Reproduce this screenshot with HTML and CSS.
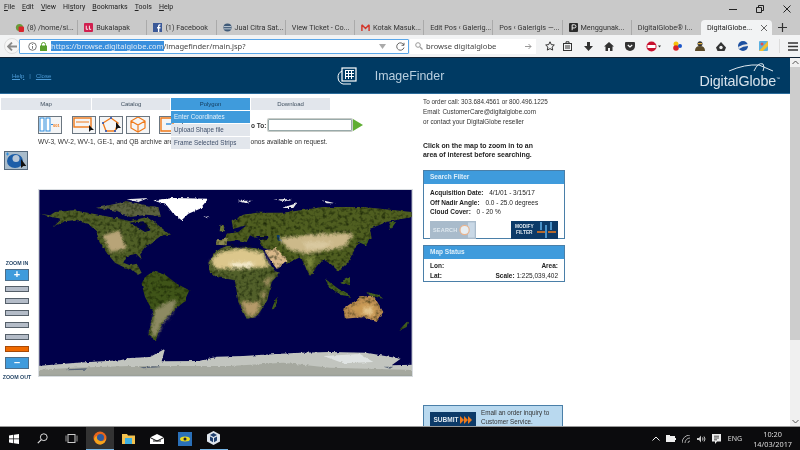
FILE: index.html
```html
<!DOCTYPE html>
<html lang="en">
<head>
<meta charset="utf-8">
<title>DigitalGlobe ImageFinder</title>
<link rel="stylesheet" href="styles.css">
</head>
<body>
<div class="screen">
  <div class="chrome">
    <div class="menubar">
      <nav class="menu"><span><u>F</u>ile</span><span><u>E</u>dit</span><span><u>V</u>iew</span><span>Hi<u>s</u>tory</span><span><u>B</u>ookmarks</span><span><u>T</u>ools</span><span><u>H</u>elp</span></nav>
      <div class="winctl">
        <svg width="10" height="10" viewBox="0 0 10 10"><path d="M1 5.500h8" stroke="#222" fill="none"/></svg>
        <svg width="10" height="10" viewBox="0 0 10 10"><path d="M1.500 3.500h5v5h-5zM3.500 3.500v-2h5v5h-2" stroke="#222" fill="none"/></svg>
        <svg width="10" height="10" viewBox="0 0 10 10"><path d="M1.500 1.500l7 7M8.500 1.500l-7 7" stroke="#222" fill="none"/></svg>
      </div>
    </div>
    <div class="tabs">
      <div class="tab"><svg class="fav" viewBox="0 0 10 10"><circle cx="5" cy="5" r="4" fill="#6a9a3a"/><rect x="4" y="4" width="6" height="6" rx="1" fill="#d8232a"/></svg><span>(8) /home/si...</span></div>
      <div class="tab"><svg class="fav" viewBox="0 0 10 10"><rect width="10" height="10" rx="1" fill="#d11f4f"/><path d="M2.500 3v4h2M6 3v4h2" stroke="#fff" fill="none"/></svg><span>Bukalapak</span></div>
      <div class="tab"><svg class="fav" viewBox="0 0 10 10"><rect width="10" height="10" fill="#3b5998"/><path d="M7 10V6h1.300V4.500H7V3.500q0-.8 1.300-.7V1.500Q5.500 1 5.500 3.500v1H4.500V6h1v4z" fill="#fff"/></svg><span>(1) Facebook</span></div>
      <div class="tab"><svg class="fav" viewBox="0 0 10 10"><circle cx="5" cy="5" r="4.500" fill="#3f5a78"/><path d="M1 4h8M1 6.500h8" stroke="#cfd8e0"/></svg><span>Jual Citra Sat...</span></div>
      <div class="tab"><span>View Ticket - Co...</span></div>
      <div class="tab"><svg class="fav" viewBox="0 0 10 10"><path d="M1 2v7M9 2v7M1 2l4 4 4-4" stroke="#d3362a" stroke-width="1.600" fill="none"/></svg><span>Kotak Masuk...</span></div>
      <div class="tab"><span>Edit Pos ‹ Galerig...</span></div>
      <div class="tab"><span>Pos ‹ Galerigis —...</span></div>
      <div class="tab"><svg class="fav" viewBox="0 0 10 10"><rect width="10" height="10" rx="1" fill="#2b2b2b"/><path d="M3.500 8V2h2.500a1.700 1.700 0 0 1 0 3.500H3.500" stroke="#fff" fill="none"/></svg><span>Menggunak...</span></div>
      <div class="tab"><span>DigitalGlobe® I...</span></div>
      <div class="tab tab-active"><span>DigitalGlobe...</span><svg class="tabx" width="8" height="8" viewBox="0 0 8 8"><path d="M1 1l6 6M7 1l-6 6" stroke="#666" fill="none"/></svg></div>
      <svg class="plus" width="9" height="9" viewBox="0 0 9 9"><path d="M4.500 0v9M0 4.500h9" stroke="#333" stroke-width="1.200"/></svg>
    </div>
    <div class="navbar">
      <div class="back"><svg width="10" height="9" viewBox="0 0 10 9"><path d="M5 .5L1 4.500l4 4M1 4.500h9" stroke="#8a8a8a" stroke-width="1.800" fill="none"/></svg></div>
      <div class="urlbar">
        <svg class="info" width="9" height="9" viewBox="0 0 9 9"><circle cx="4.500" cy="4.500" r="3.800" stroke="#777" fill="none"/><path d="M4.500 4v2.800M4.500 2v1" stroke="#777"/></svg>
        <svg class="lock" width="7" height="9" viewBox="0 0 7 9"><rect y="3.500" width="7" height="5.500" rx=".5" fill="#5aa02c"/><path d="M1.500 4V2.500a2 2 0 0 1 4 0V4" stroke="#5aa02c" fill="none"/></svg>
        <span class="url"><span class="url-sel">https://browse.digitalglobe.com</span>/imagefinder/main.jsp?</span>
        <svg class="drop" width="7" height="5" viewBox="0 0 7 5"><path d="M0 0h7L3.500 5z" fill="#aaa"/></svg>
        <svg class="reload" width="9" height="9" viewBox="0 0 9 9"><path d="M7.800 3A3.700 3.700 0 1 0 8 5.500M8 .8V3.300H5.500" stroke="#666" fill="none"/></svg>
      </div>
      <div class="searchbar">
        <svg width="8" height="8" viewBox="0 0 8 8"><circle cx="3" cy="3" r="2.300" stroke="#999" fill="none"/><path d="M5 5l2.500 2.500" stroke="#999" stroke-width="1.200"/></svg>
        <span class="search-q">browse digitalglobe</span>
        <svg class="go" width="7" height="7" viewBox="0 0 7 7"><path d="M0 3.500h6M3.500 1l2.500 2.500L3.500 6" stroke="#999" fill="none"/></svg>
      </div>
      <div class="tools">
        <svg width="10" height="10" viewBox="0 0 10 10"><path d="M5 .8l1.300 2.800 3 .4-2.200 2.100.6 3L5 7.600 2.300 9.100l.6-3L.7 4l3-.4z" stroke="#333" fill="none"/></svg>
        <svg class="t-lib" width="9" height="10" viewBox="0 0 9 10"><rect x=".5" y="2.500" width="8" height="7" stroke="#333" fill="none"/><path d="M3 2.500V.8h3v1.700M2 5h5M2 7h5" stroke="#333" fill="none"/></svg>
        <svg class="t-dl" width="9" height="9" viewBox="0 0 9 9"><path d="M3 0h3v4h3L4.500 9 0 4h3z" fill="#333"/></svg>
        <svg class="t-home" width="10" height="9" viewBox="0 0 10 9"><path d="M5 0l5 4.500H8.500V9H6V6H4v3H1.500V4.500H0z" fill="#333"/></svg>
        <svg class="t-pocket" width="10" height="9" viewBox="0 0 10 9"><path d="M1 0h8a1 1 0 0 1 1 1v3a5 5 0 0 1-10 0V1a1 1 0 0 1 1-1z" fill="#333"/><path d="M2.800 3l2.200 2 2.200-2" stroke="#fff" stroke-width="1.200" fill="none"/></svg>
        <svg class="t-stop" width="15" height="11" viewBox="0 0 15 11"><circle cx="5.500" cy="5.500" r="5" fill="#c8102e"/><rect x="1.500" y="4" width="8" height="3" fill="#fff"/><path d="M12 4.500h3l-1.500 2z" fill="#333"/></svg>
        <svg class="t-c1" width="9" height="10" viewBox="0 0 9 10"><circle cx="3" cy="3" r="2.500" fill="#f4c20d"/><circle cx="3" cy="7" r="2.800" fill="#d8232a"/><circle cx="7" cy="5" r="2" fill="#1a55c9"/></svg>
        <svg class="t-c2" width="10" height="10" viewBox="0 0 10 10"><circle cx="5" cy="2.800" r="2.500" fill="#333"/><path d="M0 10q0-5 5-5t5 5z" fill="#5a4a2a"/><rect x="3" y="2" width="4" height="1.200" fill="#e0b040"/></svg>
        <svg class="t-c3" width="10" height="9" viewBox="0 0 10 9"><path d="M5 0l5 5.500-1.500 3.500h-7L0 5.500z" fill="#333"/><circle cx="5" cy="5.500" r="1.700" fill="#eee"/></svg>
        <svg class="t-c4" width="10" height="10" viewBox="0 0 10 10"><circle cx="5" cy="5" r="5" fill="#1c4fa0"/><path d="M0 6q5-3 10-3v2Q5 5 1 8z" fill="#e8e8e8"/></svg>
        <svg class="t-c5" width="9" height="10" viewBox="0 0 9 10"><rect width="9" height="10" rx="1" fill="#5bb0e0"/><path d="M0 10l9-10v5L4 10z" fill="#f0c030"/><circle cx="3" cy="3" r="1.500" fill="#e05050"/></svg>
        <span class="sep"></span>
        <svg class="t-menu" width="10" height="9" viewBox="0 0 10 9"><path d="M0 1h10M0 4.500h10M0 8h10" stroke="#333" stroke-width="1.400"/></svg>
      </div>
    </div>
  </div>

  <div class="viewport">
    <main class="page">
      <header class="brandbar">
        <div class="helplinks"><a>Help</a><span>|</span><a>Close</a></div>
        <div class="brand">
          <svg width="20" height="18" viewBox="0 0 20 18"><rect x="5" y="1" width="14" height="13" fill="none" stroke="#fff" stroke-width="1.200"/><path d="M8 3.500h9M8 6.500h9M8 9.500h9M8.500 3v9M11.500 3v9M14.500 3v9" stroke="#fff"/><path d="M5 4a7 7 0 0 0 1 13h8" stroke="#fff" fill="none"/></svg>
          <span>ImageFinder</span>
        </div>
        <div class="logo">
          <svg class="arc" width="44" height="10" viewBox="0 0 44 10"><path d="M0 9Q16 2 30 3L44 9M25 9Q29 0 34 2q2 3 0 7" stroke="#dfe8ef" fill="none"/></svg>
          <span>DigitalGlobe<sup>™</sup></span>
        </div>
      </header>
      <div class="content">
        <div class="leftcol">
          <div class="tabmenu">
            <div class="tm tm-map">Map</div>
            <div class="tm tm-cat">Catalog</div>
            <div class="tm tm-poly tm-on">Polygon
              <div class="dropdown">
                <div class="dd dd-on">Enter Coordinates</div>
                <div class="dd">Upload Shape file</div>
                <div class="dd">Frame Selected Strips</div>
              </div>
            </div>
            <div class="tm tm-dl">Download</div>
          </div>
          <div class="toolrow">
            <div class="tool tool-a"><svg width="24" height="17" viewBox="0 0 24 17"><rect x="2" y="2" width="4" height="13" fill="#fff" stroke="#2f8fe0"/><rect x="8" y="2" width="4" height="13" fill="#fff" stroke="#2f8fe0"/><path d="M13 8.500h2" stroke="#2f8fe0"/><text x="15" y="10.500" class="tool-txt">001</text></svg></div>
            <div class="tool tool-b"><svg width="24" height="17" viewBox="0 0 24 17"><rect x="2" y="2" width="17" height="9" fill="none" stroke="#f07a1a" stroke-width="1.400"/><path d="M4 6h13" stroke="#f07a1a"/><path d="M17 9l0 7 2-2 3 0z" fill="#111"/></svg></div>
            <div class="tool tool-c"><svg width="24" height="17" viewBox="0 0 24 17"><path d="M12 2l7 5-3 8H7L4 7z" fill="none" stroke="#f07a1a" stroke-width="1.300"/><circle cx="12" cy="2" r="1" fill="#1a55c9"/><circle cx="4" cy="7" r="1" fill="#1a55c9"/><circle cx="7" cy="15" r="1" fill="#1a55c9"/><circle cx="16" cy="15" r="1" fill="#1a55c9"/><path d="M17 6v8l2-2 3 0z" fill="#111"/></svg></div>
            <div class="tool tool-d"><svg width="24" height="17" viewBox="0 0 24 17"><path d="M12 1l7 4v7l-7 4-7-4V5zM5 5l7 4 7-4M12 9v7" fill="none" stroke="#f07a1a" stroke-width="1.200"/></svg></div>
            <div class="tool tool-e"><svg width="24" height="17" viewBox="0 0 24 17"><path d="M2 2h12v13H2z" fill="none" stroke="#f07a1a" stroke-width="1.400"/><path d="M7 8h6" stroke="#2f8fe0" stroke-width="1.400"/></svg></div>
            <div class="zoomto">
              <span class="zt-label">o To:</span>
              <span class="zt-input"></span>
              <svg width="10" height="12" viewBox="0 0 10 12"><path d="M0 0l10 6-10 6z" fill="#5fae33"/></svg>
            </div>
          </div>
          <p class="archive"><span class="arch-a">WV-3, WV-2, WV-1, GE-1, and QB archive are</span><span>onos available on request.</span></p>
          <div class="globe"><svg width="24" height="19" viewBox="0 0 24 19"><rect width="24" height="19" fill="#a9bccb"/><rect x=".5" y=".5" width="23" height="18" fill="none" stroke="#55697c"/><ellipse cx="11" cy="10" rx="8" ry="7" fill="#1d5ea8"/><circle cx="12" cy="7.500" r="3.500" fill="#b7c6d6"/><path d="M17 8v9l2.300-2 3 0z" fill="#111"/><path d="M2 3h3M3.500 1.500v3" stroke="#2f8fe0"/></svg></div>
          <div class="maprow">
            <div class="zoomcol">
              <div class="zlabel">ZOOM IN</div>
              <div class="zbtn">+</div>
              <div class="zbar"></div>
              <div class="zbar"></div>
              <div class="zbar"></div>
              <div class="zbar"></div>
              <div class="zbar"></div>
              <div class="zbar zbar-on"></div>
              <div class="zbtn zbtn-minus">–</div>
              <div class="zlabel zlabel-out">ZOOM OUT</div>
            </div>
            <svg class="map" width="373" height="186" viewBox="28 14 1117 558">
              <defs>
                <filter id="rough" x="-3%" y="-3%" width="106%" height="106%" color-interpolation-filters="sRGB">
                  <feTurbulence type="fractalNoise" baseFrequency="0.07" numOctaves="2" seed="4" result="n"/>
                  <feDisplacementMap in="SourceGraphic" in2="n" scale="9" xChannelSelector="R" yChannelSelector="G" result="d"/>
                  <feTurbulence type="fractalNoise" baseFrequency="0.09" numOctaves="2" seed="11"/>
                  <feColorMatrix values="0 0 0 0 .05  0 0 0 0 .09  0 0 0 0 0  1.600 0 0 0 -.72"/>
                  <feComposite in2="d" operator="in" result="m"/>
                  <feMerge><feMergeNode in="d"/><feMergeNode in="m"/></feMerge>
                </filter>
                <filter id="soft" x="-20%" y="-20%" width="140%" height="140%" color-interpolation-filters="sRGB">
                  <feTurbulence type="fractalNoise" baseFrequency="0.08" numOctaves="2" seed="9" result="n"/>
                  <feGaussianBlur in="SourceGraphic" stdDeviation="5" result="b"/>
                  <feDisplacementMap in="b" in2="n" scale="14" xChannelSelector="R" yChannelSelector="G"/>
                </filter>
                <filter id="ice" x="-2%" y="-20%" width="104%" height="140%" color-interpolation-filters="sRGB">
                  <feTurbulence type="fractalNoise" baseFrequency="0.1" numOctaves="2" seed="21" result="n"/>
                  <feDisplacementMap in="SourceGraphic" in2="n" scale="9" xChannelSelector="R" yChannelSelector="G"/>
                </filter>
              </defs>
              <rect x="28" y="14" width="1117" height="558" fill="#00004a"/>
              <g filter="url(#rough)">
                <path fill="#4f5e26" d="M30 85L60 90 75 80 130 75 190 85 240 95 270 100 300 108 350 95 385 120 420 148 395 150 375 165 345 185 330 205 335 222 318 205 290 212 280 232 300 240 320 235 335 262 325 268 305 252 280 245 255 232 232 205 208 170 200 140 175 115 130 105 105 108 70 125 95 100 65 95Z"/>
                <path fill="#5c6240" d="M200 68L290 48 350 60 385 65 392 92 350 88 300 95 260 76Z"/>
                <path fill="#00004a" d="M298 112L340 108 362 135 345 140 325 128Z"/>
                <path fill="#3f5418" d="M335 295L345 275 370 258 405 268 440 295 478 315 462 350 425 380 405 400 385 440 378 465 355 450 370 380 345 335Z"/>
                <path fill="#52602a" d="M535 232L560 195 590 182 640 180 700 195 705 215 735 258 750 262 725 290 712 345 680 395 650 400 625 350 615 285 560 275 540 262Z"/>
                <path fill="#4f5e20" d="M580 168L590 145 625 140 650 120 610 130 605 108 640 88 680 82 760 82 880 65 1000 65 1145 80 1145 95 1070 110 1020 130 1025 160 985 170 975 190 955 230 925 258 905 238 880 222 840 272 812 215 770 235 725 195 700 188 690 165 660 150 650 170 625 165 600 168Z"/>
                <path fill="#8c8a52" d="M558 178L560 162 592 160 590 180Z"/>
                <path fill="#6f7a3a" d="M572 118l12 2-3 18-12 0z"/>
                <path fill="#0a3a66" d="M740 150l12-3 2 24-10-2z"/>
                <path fill="#00004a" d="M680 152l38 0-8 12-26-2zM600 175l90 6-10 6-80 0z"/>
                <path fill="#d9b88a" d="M703 195L738 188 775 226 740 250 726 232Z"/>
                <path fill="#b88a50" d="M940 370L990 335 1030 330 1060 380 1040 410 1000 395 945 400Z"/>
                <path fill="#45601f" d="M885 280l40 30 40 25-30-6-35-20zM930 290l30-15 0 25zM1005 320l40 8 15 12-40-10zM725 372l15-38 2 15-10 22zM1105 437l30-32-5 20zM1078 110l20 0-18 25zM985 170l35-10-12 20z"/>
              </g>
              <g filter="url(#ice)">
                <path fill="#fff" d="M370 45L430 38 535 40 510 70 475 85 455 105 430 85 410 60Z"/>
                <path fill="#e8e8ea" d="M620 46h45l-15 8zM730 42h55l-20 6zM875 44l40 10-25 0zM755 68l45-14-10 14zM290 42l65-4-30 12zM520 92l20 2-8 5z"/>
              </g>
              <g filter="url(#soft)">
                <path fill="#dcc78c" d="M540 228L575 197 640 190 700 202 718 245 620 250 560 250Z"/>
                <path fill="#f6edd0" d="M600 232h75l-10 14h-60z"/>
                <path fill="#b59a6a" d="M632 350L695 350 680 388 652 392Z"/>
                <path fill="#a08f60" d="M700 285l28-15-18 38zM690 320l20 0-10 30z"/>
                <path fill="#ccb98a" d="M745 160L830 148 970 142 945 185 830 205 780 195Z"/>
                <path fill="#d9c9a0" d="M820 170h90l-30 20h-50z"/>
                <path fill="#b8a478" d="M218 150L268 135 290 192 240 200Z"/>
                <path fill="#7f8a3e" d="M825 218l30-5-15 48z"/>
                <path fill="#8d8a62" d="M375 372L408 352 442 342 425 385 395 415 380 455 362 448Z"/>
                <path fill="#c99a55" d="M955 372L1000 348 1040 362 1040 392 990 392Z"/>
                <path fill="#e2c48c" d="M1000 365l28 0 0 22-28 0z"/>
              </g>
              <g filter="url(#ice)">
                <path fill="#c2c5bf" d="M20 542L140 532 270 525 300 518 360 515 405 490 395 528 510 527 560 514 640 512 750 505 810 502 900 500 1010 502 1112 520 1085 540 1160 538V600H20Z"/>
                <path fill="#a5a89f" d="M20 554L130 547 300 542 450 542 600 542 760 532 900 547 1160 554V600H20Z"/>
                <path fill="#dfe3e2" d="M880 512l110-6 40 24-90 4z"/>
                <path fill="#5a6678" d="M110 552l60-3 0 4-60 2zM330 546l60-4 0 4-50 3zM1060 544l30 0-10 6z"/>
              </g>
              <rect x="28" y="568" width="1117" height="4" fill="#9ca19a"/>
            </svg>
          </div>
        </div>
        <aside class="rightcol">
          <div class="order">To order call: 303.684.4561 or 800.496.1225<br>Email: CustomerCare@digitalglobe.com<br>or contact your DigitalGlobe reseller</div>
          <p class="hint">Click on the map to zoom in to an<br>area of interest before searching.</p>
          <section class="panel panel-filter">
            <h2>Search Filter</h2>
            <div class="panel-body">
              <div class="row"><b>Acquisition Date:</b> 4/1/01 - 3/15/17</div>
              <div class="row"><b>Off Nadir Angle:</b> 0.0 - 25.0 degrees</div>
              <div class="row"><b>Cloud Cover:</b> 0 - 20 %</div>
              <div class="btnrow">
                <div class="btn-search">SEARCH<svg width="22" height="18" viewBox="0 0 22 18"><rect x="13" y="0" width="8" height="18" fill="#c9d8e6"/><circle cx="9" cy="9" r="5.500" fill="#e8eef2" stroke="#e9b48f" stroke-width="1.500"/></svg></div>
                <div class="btn-modify"><span>MODIFY<br>FILTER</span><svg width="22" height="18" viewBox="0 0 22 18"><path d="M5 1v8M15 1v8M10 4v13" stroke="#5aa8e0" stroke-width="1.600"/><path d="M1 11h8M12 11h8" stroke="#f07a1a" stroke-width="1.600"/></svg></div>
              </div>
            </div>
          </section>
          <section class="panel panel-status">
            <h2>Map Status</h2>
            <div class="panel-body">
              <div class="row split"><b>Lon:</b><b>Area:</b></div>
              <div class="row split"><b>Lat:</b><span><b>Scale:</b> 1:225,039,402</span></div>
            </div>
          </section>
          <section class="submit">
            <div class="submit-btn">SUBMIT<svg width="12" height="8" viewBox="0 0 12 8"><path d="M0 0l4 4-4 4zM4 0l4 4-4 4zM8 0l4 4-4 4z" fill="#f07a1a"/></svg></div>
            <div class="submit-txt">Email an order inquiry to<br>Customer Service.</div>
          </section>
        </aside>
      </div>
    </main>
    <div class="scrollbar">
      <svg width="7" height="5" viewBox="0 0 7 5"><path d="M.5 4l3-3 3 3" stroke="#555" fill="none"/></svg>
      <div class="thumb"></div>
      <svg width="7" height="5" viewBox="0 0 7 5"><path d="M.5 1l3 3 3-3" stroke="#555" fill="none"/></svg>
    </div>
  </div>

  <footer class="taskbar">
    <div class="tb-left">
      <div class="tb-item"><svg width="10" height="10" viewBox="0 0 10 10"><path d="M0 1.400l4.300-.6v3.800H0zM5 .7L10 0v4.600H5zM0 5.300h4.300v3.900L0 8.600zM5 5.300h5V10l-5-.7z" fill="#fff"/></svg></div>
      <div class="tb-item"><svg width="11" height="11" viewBox="0 0 11 11"><circle cx="6.800" cy="4.200" r="3.400" stroke="#ddd" fill="none"/><path d="M4.300 6.700L.8 10.200" stroke="#ddd" stroke-width="1.200"/></svg></div>
      <div class="tb-item"><svg width="13" height="9" viewBox="0 0 13 9"><rect x="3" y=".5" width="7" height="8" stroke="#ccc" fill="none"/><path d="M1 1.500v6M12 1.500v6" stroke="#999"/></svg></div>
      <div class="tb-item tb-active"><svg width="14" height="14" viewBox="0 0 14 14"><circle cx="7" cy="7" r="6.500" fill="#e8661c"/><circle cx="7.500" cy="6.500" r="3.500" fill="#2e5c9e"/><path d="M1 8q2 6 7 5.500Q13 12 13 7q-2 4-6 3Q3 9 4 5 2 5 1 8z" fill="#f4a61d"/></svg></div>
      <div class="tb-item"><svg width="13" height="11" viewBox="0 0 13 11"><path d="M0 1h5l1 1.500h7V11H0z" fill="#f2c14e"/><rect x="3" y="5" width="7" height="6" fill="#3fb0e0"/></svg></div>
      <div class="tb-item"><svg width="14" height="10" viewBox="0 0 14 10"><path d="M0 3.500L7 0l7 3.500V10H0z" fill="#fff"/><path d="M0 3.500L7 7l7-3.500M3 7h8" stroke="#111" fill="none"/></svg></div>
      <div class="tb-item"><svg width="14" height="14" viewBox="0 0 14 14"><rect width="14" height="14" fill="#2a70b8"/><ellipse cx="7" cy="7" rx="5" ry="2.500" fill="#e8d820"/><circle cx="7" cy="7" r="1.500" fill="#223"/></svg></div>
      <div class="tb-item tb-mark"><svg width="13" height="14" viewBox="0 0 13 14"><path d="M6.500 0L13 3.500v7L6.500 14 0 10.500v-7z" fill="#dfe6ee"/><path d="M3 4l3.500 2 3.500-2-3.500-2zM3 5.500v4l3 1.700v-4.200zM10 5.500v4l-3 1.700v-4.200z" fill="#1f3f6e"/></svg></div>
    </div>
    <div class="tray">
      <svg width="8" height="5" viewBox="0 0 8 5"><path d="M.5 4.500L4 1l3.500 3.500" stroke="#eee" fill="none"/></svg>
      <svg width="10" height="7" viewBox="0 0 10 7"><rect y="1" width="9" height="6" fill="#eee"/><rect x="9" y="3" width="1" height="2" fill="#eee"/><rect width="4" height="2" fill="#eee"/></svg>
      <svg width="9" height="8" viewBox="0 0 9 8"><path d="M0 8a8 8 0 0 1 8-8M3 8a5 5 0 0 1 5-5M6 8a2 2 0 0 1 2-2" stroke="#aaa" fill="none"/></svg>
      <svg width="9" height="8" viewBox="0 0 9 8"><path d="M0 3h2l2-2.500v7L2 5H0z" fill="#ccc"/><path d="M5.500 2.500q1 1.500 0 3M7 1.500q2 2.500 0 5" stroke="#ccc" fill="none"/></svg>
      <svg width="9" height="10" viewBox="0 0 9 10"><path d="M0 0h9v7.500H5L3 10V7.500H0z" fill="#eee"/><path d="M2 2.200h5M2 4h5M2 5.800h3" stroke="#111" stroke-width=".7"/></svg>
      <span class="lang">ENG</span>
      <div class="clock">10:20<br>14/03/2017</div>
    </div>
  </footer>
</div>
</body>
</html>
```

FILE: styles.css
```css
* { box-sizing: border-box; }
html, body { margin: 0; padding: 0; }
body { font-family: "Liberation Sans", Arial, sans-serif; }
.screen { width: 800px; height: 450px; display: flex; flex-direction: column; overflow: hidden; background: #fff; filter: blur(.3px); }

/* Browser chrome */
.chrome { height: 58px; flex: none; background: #c9c9c9; display: flex; flex-direction: column; font-family: Roboto, sans-serif; color: #333; border-bottom: 1px solid #123; }
.menubar { height: 20px; display: flex; justify-content: space-between; padding: 2px 8px 0 4px; }
.menu { display: flex; gap: 7px; font-size: 7px; line-height: 10px; color: #222; }
.winctl { display: flex; gap: 17px; padding-top: 2px; }
.tabs { height: 15px; display: flex; align-items: center; padding-left: 9px; font-size: 7.300px; color: #333; }
.tab { width: 69.200px; height: 15px; display: flex; align-items: center; gap: 3px; padding-left: 6px; border-right: 1px solid #aaa; white-space: nowrap; overflow: hidden; }
.tab:nth-child(10) { border-right: 0; }
.tab-active { width: 71px; height: 15px; background: #f2f3f4; border-radius: 4px 4px 0 0; border-right: 0; padding: 0 4px 0 6px; justify-content: space-between; color: #222; }
.fav { width: 9px; height: 9px; flex: none; }
.tabx { flex: none; }
.plus { margin-left: 6px; }
.navbar { flex: 1; background: #f2f3f4; display: flex; align-items: center; padding: 0 7px 0 4px; }
.back { width: 16px; height: 16px; border-radius: 50%; background: #f6f6f6; border: 1px solid #ddd; display: flex; align-items: center; justify-content: center; flex: none; }
.urlbar { width: 390px; height: 15px; margin-left: -1px; background: #fff; border: 1px solid #5aa6e8; border-radius: 1px; display: flex; align-items: center; padding: 0 3px 0 8px; flex: none; font-size: 8px; }
.info { flex: none; }
.lock { margin-left: 3px; flex: none; }
.url { margin-left: 4px; flex: 1; color: #444; white-space: nowrap; font-family: "Noto Sans", sans-serif; font-size: 7.500px; }
.url-sel { background: #3a8fdd; color: #dfeaf5; }
.drop { margin-right: 10px; }
.searchbar { width: 126px; height: 15px; margin-left: 1px; background: #fff; display: flex; align-items: center; padding: 0 4px 0 5px; gap: 3px; font-family: "Noto Sans", sans-serif; font-size: 7.600px; flex: none; }
.search-q { flex: 1; color: #444; white-space: nowrap; }
.tools { flex: 1; display: flex; align-items: center; padding-left: 9px; }
.tools svg { flex: none; }
.t-lib { margin-left: 8px; }
.t-dl { margin-left: 12px; }
.t-home { margin-left: 11px; }
.t-pocket { margin-left: 11px; }
.t-stop { margin-left: 11px; }
.t-c1 { margin-left: 12px; }
.t-c2 { margin-left: 13px; }
.t-c3 { margin-left: 11px; }
.t-c4 { margin-left: 12px; }
.t-c5 { margin-left: 11px; }
.sep { width: 1px; height: 14px; background: #ddd; margin-left: 11px; }
.t-menu { margin-left: 8px; }

/* Page */
.viewport { flex: 1; min-height: 0; display: flex; border-bottom: 1px solid #999; }
.page { flex: 1; min-width: 0; overflow: hidden; }
.brandbar { height: 36px; background: #003a63; border-bottom: 1px solid #2b6c9b; display: grid; grid-template-columns: 1fr auto 1fr; align-items: center; color: #fff; padding: 0 10px 0 12px; }
.helplinks { display: flex; gap: 5px; font-size: 6px; color: #4b9ad6; }
.helplinks a { text-decoration: underline; }
.brand { display: flex; align-items: center; gap: 18px; font-size: 12.400px; color: #b9cfdf; margin-left: -11px; }
.logo { justify-self: end; font-size: 14.300px; line-height: 14px; letter-spacing: -.1px; color: #d7e3ec; display: flex; flex-direction: column; align-items: flex-end; padding-top: 3px; }
.logo .arc { margin: -5px 7px 0 0; display: block; }
.logo sup { font-size: 4px; }
.content { display: flex; }
.leftcol { width: 423px; flex: none; padding-top: 4px; }
.tabmenu { display: flex; gap: 1px; padding-left: 1px; height: 12px; }
.tm { height: 12px; background: #e2e6ec; color: #3f4f5f; font-size: 6px; line-height: 12px; text-align: center; position: relative; }
.tm-map { width: 90px; }
.tm-cat { width: 78px; }
.tm-poly { width: 79px; }
.tm-dl { width: 79px; }
.tm-on { background: #3f9bdc; color: #123a5a; }
.dropdown { position: absolute; z-index: 5; left: 0; top: 13px; width: 79px; display: flex; flex-direction: column; gap: 1px; text-align: left; }
.dd { height: 12px; background: #e2e6ec; color: #3f4f6a; padding-left: 3px; font-size: 6.300px; line-height: 12px; white-space: nowrap; }
.dd-on { background: #3f9bdc; color: #e6f2fb; }
.toolrow { display: flex; align-items: center; padding-left: 38px; margin-top: 6px; height: 18px; }
.tool { width: 24px; height: 18px; background: #f4f5f6; border: 1px solid #6b7680; margin-right: 3px; flex: none; overflow: hidden; }
.tool svg { display: block; margin: -1px; }
.tool-a { margin-right: 10px; }
.tool-d { margin-right: 9px; }
.tool-txt { font-size: 4px; font-weight: bold; fill: #f07a1a; font-family: "Liberation Sans", sans-serif; }
.zoomto { display: flex; align-items: center; font-size: 6.500px; font-weight: bold; color: #333; margin-left: 65px; }
.zt-input { width: 84px; height: 12px; border: 1px solid #9aa; background: #fff; border-radius: 1px; box-shadow: 0 0 0 1px #c8ccc8; margin: 0 1px 0 2px; }
.archive { display: flex; margin: 4px 0 0 38px; font-size: 6.600px; line-height: 8px; color: #333; white-space: nowrap; }
.arch-a { width: 212.500px; }
.globe { margin: 5px 0 0 4px; height: 19px; }
.globe svg { display: block; }
.maprow { display: flex; margin-top: 20px; }
.zoomcol { width: 39px; flex: none; padding-top: 70px; display: flex; flex-direction: column; align-items: flex-start; padding-left: 5px; }
.zlabel { width: 24px; font-size: 5.300px; line-height: 6px; font-weight: bold; color: #2a4a6a; text-align: center; white-space: nowrap; margin-bottom: 3px; }
.zlabel-out { margin: 5px 0 0 -3px; width: 30px; }
.zbtn { width: 24px; height: 12px; background: #3f9bdc; border: 1px solid #4d6d88; color: #fff; font: bold 11px/9px "Liberation Sans", sans-serif; text-align: center; margin-bottom: 5px; }
.zbtn-minus { margin: 5px 0 0; }
.zbar { width: 24px; height: 6px; background: #b4bcc8; border: 1px solid #555f69; margin-bottom: 6px; }
.zbar-on { background: #f06a00; border-color: #a74a08; margin-bottom: 0; }
.map { display: block; flex: none; outline: 1px solid #d8dce0; }
.rightcol { width: 142px; flex: none; }
.order { margin-top: 3px; font-size: 6.350px; line-height: 10px; color: #333; white-space: nowrap; }
.hint { margin: 14px 0 0; font-size: 6.900px; line-height: 9px; font-weight: bold; color: #222; white-space: nowrap; }
.panel { border: 1px solid #4a7fa8; background: #fff; }
.panel h2 { margin: 0; height: 13px; background: #3f9bdc; color: #dcedf9; font-size: 6.500px; line-height: 12px; font-weight: bold; padding-left: 6px; }
.panel-filter { margin-top: 11px; height: 69px; }
.panel-status { margin-top: 6px; height: 37px; }
.panel-body { padding: 4px 6px 0; }
.panel-status .panel-body { padding-top: 2px; }
.row { font-size: 6.500px; line-height: 9.500px; color: #222; white-space: nowrap; }
.row b { margin-right: 4px; }
.split { display: flex; justify-content: space-between; }
.split b:last-child { margin-right: 0; }
.split span b { margin-right: 1px; }
.btnrow { display: flex; justify-content: space-between; margin-top: 4px; }
.btn-search { width: 46px; height: 18px; background: #a9bbcb; color: #dfe8ef; font-size: 5.500px; font-weight: bold; letter-spacing: .2px; display: flex; align-items: center; justify-content: space-between; padding-left: 3px; }
.btn-modify { width: 47px; height: 18px; background: #0c3a68; color: #dfe8ef; font-size: 4.800px; line-height: 6px; font-weight: bold; display: flex; align-items: center; justify-content: space-between; padding-left: 4px; text-align: center; }
.btn-modify svg { flex: none; }
.submit { margin-top: 123px; width: 140px; height: 40px; background: #b9d9ef; border: 1px solid #4a7fa8; display: flex; padding: 6px 6px; gap: 5px; }
.submit-btn { width: 46px; height: 20px; background: #0c3a68; color: #dfe8ef; font-size: 6.500px; font-weight: bold; display: flex; align-items: center; justify-content: center; gap: 2px; flex: none; padding-bottom: 5px; }
.submit-txt { margin-top: -3px; font-size: 6.300px; line-height: 8.500px; color: #333; white-space: nowrap; }
.scrollbar { width: 10px; flex: none; background: #f0f0f0; display: flex; flex-direction: column; align-items: center; padding: 2px 0 2px; gap: 2px; }
.thumb { flex: 1; width: 100%; background: linear-gradient(#cdcdcd 0 78%, #f0f0f0 78%); }

/* Taskbar */
.taskbar { height: 23px; flex: none; background: #0b0b0d; display: flex; justify-content: space-between; color: #ddd; }
.tb-left { display: flex; }
.tb-item { width: 28.500px; height: 23px; display: flex; align-items: center; justify-content: center; flex: none; }
.tb-active { background: #333; border-bottom: 1px solid #78b7e6; }
.tb-mark { border-bottom: 1px solid #78b7e6; }
.tray { display: flex; align-items: center; gap: 6px; padding-right: 8px; }
.lang { font: 7px "Noto Sans", sans-serif; margin-left: 1px; }
.clock { font: 7.300px/10px "Noto Sans", sans-serif; text-align: center; margin-left: 5px; }
```
